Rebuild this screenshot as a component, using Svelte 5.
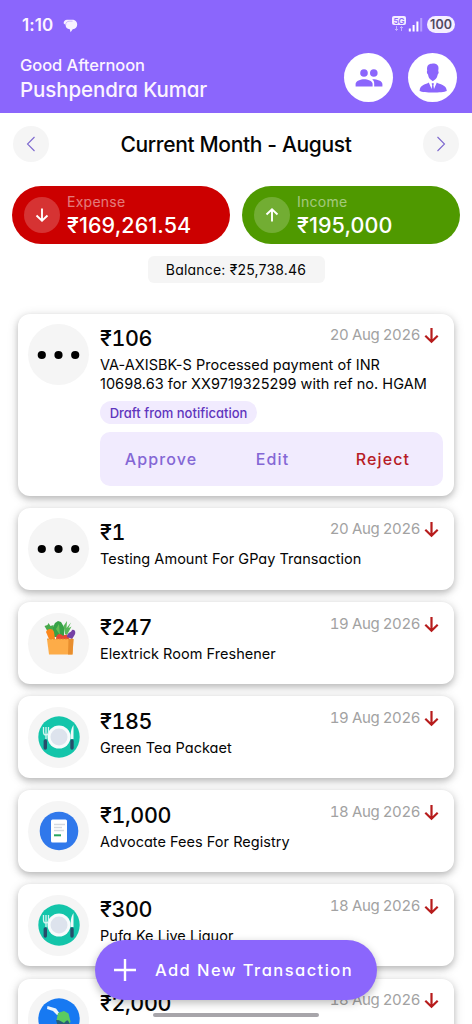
<script>
  const items = [
    { icon: 'dots', amount: '₹106', note: 'VA-AXISBK-S Processed payment of INR\n10698.63 for XX9719325299 with ref no. HGAM', date: '20 Aug 2026', draft: true },
    { icon: 'dots', amount: '₹1', note: 'Testing Amount For GPay Transaction', date: '20 Aug 2026' },
    { icon: 'bag', amount: '₹247', note: 'Elextrick Room Freshener', date: '19 Aug 2026' },
    { icon: 'plate', amount: '₹185', note: 'Green Tea Packaet', date: '19 Aug 2026' },
    { icon: 'bill', amount: '₹1,000', note: 'Advocate Fees For Registry', date: '18 Aug 2026' },
    { icon: 'plate', amount: '₹300', note: 'Pufa Ke Live Liquor', date: '18 Aug 2026' },
    { icon: 'fuel', amount: '₹2,000', note: 'Fuel', date: '18 Aug 2026' }
  ];
</script>

<div class="screen">
  <header>
    <div class="status">
      <span class="clock">1:10</span>
      <svg class="chat" width="15" height="15" viewBox="0 0 15 15"><path d="M4 .8h5.200C12 .8 14.200 2.600 14.200 5.500c0 2.400-1.700 4.500-4.500 4.700L7.600 13.200 6.800 10.200C4 10 2.700 8.500 2.600 6L.6 4.200C.8 2.100 2 .8 4 .8Z" fill="#f8f2ff"/><path d="M2.700 6C2.600 3.500 4.300 2.200 6.500 2.200h3" fill="none" stroke="#8b66fc" stroke-width=".4"/></svg>
      <span class="grow"></span>
      <svg class="net" width="31" height="17" viewBox="0 0 31 17">
        <rect x="0" y="0" width="14" height="9" rx="2" fill="#f4edff"/>
        <text x="7" y="7.500" text-anchor="middle" font-size="8" font-weight="600" fill="#8b66fc">5G</text>
        <path d="M4.500 10v4.500M3 13l1.500 1.500L6 13M9.500 15v-4.500M8 12l1.500-1.500L11 12" fill="none" stroke="#c3b0ff" stroke-width="1"/>
        <path d="M17.800 15.500v-3M21.600 15.500V9M25.400 15.500V5.500" stroke="#fff" stroke-width="2"/>
        <path d="M29.200 15.500V2" stroke="#b59dff" stroke-width="2"/>
      </svg>
      <span class="battery">100</span>
    </div>
    <div class="hello">
      <div class="names">
        <div class="greet">Good Afternoon</div>
        <div class="user">Pushpendra Kumar</div>
      </div>
      <button class="round" aria-label="Groups">
        <svg width="28" height="20" viewBox="0 0 28 20" fill="#8b66fc"><circle cx="9" cy="5" r="3.800"/><path d="M.6 18.500v-2.400c0-3.400 5.200-4.900 8.600-4.900s8.400 1.500 8.400 4.900v2.400Z"/><circle cx="18.800" cy="5" r="3.800"/><path d="M17.800 11.300c4.200.1 9.600 1.500 9.600 4.800v2.400h-8.200v-2.400c0-2-.2-3.500-1.900-4.700Z"/></svg>
      </button>
      <button class="round" aria-label="Profile">
        <svg width="28" height="30" viewBox="0 0 28 30" fill="#8b66fc"><path d="M8.200 7.500C7.600 3.500 9 .8 13 .8c1-.7 6.800-.5 6.500 4.600l-.3 2.800c.9.300.4 2.800-.5 3.200-.4 2.600-1.500 4.100-2.600 5.200l-2.300 1.600-2.200-1.600c-1.200-1.100-2.200-2.700-2.600-5.200-1-.5-1.500-2.800-.8-3.900Z"/><path d="M9.800 19.600 12.600 26l.6-4-.7-1.300 1.300-.8 1.300.8-.7 1.300.6 4 2.800-6.400c2.600 2 9.600 1.900 10 8.300C23.600 30 4.400 30 .6 27.900.9 21.500 7.200 21.600 9.800 19.600Z"/></svg>
      </button>
    </div>
  </header>

  <nav>
    <button class="arrow" aria-label="Previous month"><svg width="10" height="16" viewBox="0 0 10 16"><path d="M8.500 1 1.500 8l7 7"/></svg></button>
    <h1>Current Month - August</h1>
    <button class="arrow" aria-label="Next month"><svg width="10" height="16" viewBox="0 0 10 16"><path d="M1.500 1l7 7-7 7"/></svg></button>
  </nav>

  <section class="totals">
    <div class="total expense">
      <span class="disc"><svg width="14" height="16" viewBox="0 0 14 16"><path d="M7 1.500v12M1.500 8.500 7 13.800l5.500-5.300"/></svg></span>
      <div><div class="label">Expense</div><div class="sum">₹169,261.54</div></div>
    </div>
    <div class="total income">
      <span class="disc"><svg width="14" height="16" viewBox="0 0 14 16"><path d="M7 14.500V2.500M1.500 7.500 7 2.200l5.500 5.300"/></svg></span>
      <div><div class="label">Income</div><div class="sum">₹195,000</div></div>
    </div>
  </section>
  <div class="balance"><span>Balance: ₹25,738.46</span></div>

  <main>
    {#each items as item}
      <article class:draft={item.draft}>
        <div class="avatar">
          {#if item.icon === 'dots'}
            <svg width="43" height="10" viewBox="0 0 43 10"><circle cx="4.800" cy="5" r="4.100"/><circle cx="21.500" cy="5" r="4.100"/><circle cx="38.200" cy="5" r="4.100"/></svg>
          {:else if item.icon === 'bag'}
            <svg class="bag" width="42" height="42" viewBox="0 0 42 42">
              <path d="M9 15 4.500 7l3-1 1-2 2 3 3-1-1 8Z" fill="#48a94b"/>
              <path d="M13 18V8l2-4 3-2 3 1 3 5v10Z" fill="#37a247"/>
              <path d="M16 10l3-5 1 11" fill="#66bd55"/>
              <path d="M25 15 23.500 7 27 2l-.5 7L31 3.500 28.500 9l3-1.500L27 16Z" fill="#58b75a"/>
              <path d="M6 13c1-4 7-4 8 0l1 7H9Z" fill="#fb861b"/>
              <path d="M16 20c0-6 5-6 7-3 3-3 7 0 6 4Z" fill="#e84934"/>
              <path d="M27 18c0-5 4-4 5-7 4-1 4 4 2 6l-2 3Z" fill="#7541a5"/>
              <path d="M7 20h26.500l-1 15.500H9Z" fill="#fdac48"/><path d="M28.500 20h5l-1 15.500h-4.500Z" fill="#e88e2e"/>
              <path d="M7 20h26" stroke="#d98e34" stroke-dasharray="2 1" stroke-width=".8"/>
            </svg>
          {:else if item.icon === 'plate'}
            <svg width="42" height="42" viewBox="0 0 42 42">
              <circle cx="21" cy="21" r="20.700" fill="#13c5aa"/>
              <circle cx="21" cy="21" r="11.500" fill="#f7fbfc"/><circle cx="21" cy="21" r="8.500" fill="#dde3ed"/>
              <path d="M5.500 11v5c0 2 1 3 2.500 3s2.500-1 2.500-3v-5M8 11v12" fill="none" stroke="#d6f4f1" stroke-width="1.300"/>
              <path d="M35.500 9v14h-3c0-6 .4-10 3-14Z" fill="#eff9fa"/>
              <path d="M7.300 25v7M34 25v7" stroke="#274c6a" stroke-width="3.400" stroke-linecap="round"/>
            </svg>
          {:else if item.icon === 'bill'}
            <svg width="40" height="40" viewBox="0 0 40 40">
              <circle cx="20" cy="20" r="19.300" fill="#3078eb"/><rect x="12" y="8.500" width="16" height="23" rx="1.500" fill="#fff"/>
              <path d="M15 13.500h11M15 16.500h8M15 19.500h10" stroke="#d5d9df" stroke-width="1.500"/><path d="M15 24.300h7" stroke="#27a660" stroke-width="2"/>
            </svg>
          {:else}
            <svg width="42" height="42" viewBox="0 0 42 42">
              <circle cx="21" cy="21" r="20.700" fill="#1779f2"/>
              <path d="m9.500 8 8.500 2.500 4 5.500-3 1-4-4-6-2Z" fill="#eef6fc"/>
              <path d="m20 15 6-2 4.500 2.500 2 8-2 6-12-7Z" fill="#5bcb61"/><path d="m18 22 12 .5L33 28l-5 6-8-5Z" fill="#285e78"/><path d="m19 21 10 1-3 3Z" fill="#5bcb61"/>
            </svg>
          {/if}
        </div>
        <div class="body">
          <div class="top">
            <span class="amount">{item.amount}</span>
            <span class="date">{item.date}</span>
            <svg class="down" width="15" height="17" viewBox="0 0 15 17"><path d="M7.500 1v13.500M1.300 8.700l6.200 6 6.200-6"/></svg>
          </div>
          <p class="note">{item.note}</p>
          {#if item.draft}
            <span class="chip">Draft from notification</span>
            <div class="actions"><button>Approve</button><button>Edit</button><button class="reject">Reject</button></div>
          {/if}
        </div>
      </article>
    {/each}
  </main>

  <button class="add">
    <svg width="22" height="22" viewBox="0 0 22 22"><path d="M11 0v22M0 11h22" stroke="#fff" stroke-width="2.400"/></svg>
    <span>Add New Transaction</span>
  </button>
  <div class="handle"></div>
</div>

<style>
  :global(body) { background: #fff; overflow: hidden; }
  .screen { position: relative; width: 472px; height: 1024px; overflow: hidden; background: #fff; color: #050505; font-family: Inter, 'Noto Sans', sans-serif; font-feature-settings: 'cv11' 1; font-weight: 500; display: flex; flex-direction: column; }
  button { font: inherit; font-feature-settings: inherit; letter-spacing: inherit; border: 0; padding: 0; background: none; color: inherit; display: flex; align-items: center; justify-content: center; white-space: nowrap; }
  svg { display: block; flex: none; }
  header { height: 113px; flex: none; background: #8b66fc; color: #fcf4ff; }
  .status { display: flex; height: 49px; align-items: center; padding: 0 17px 0 22px; box-sizing: border-box; }
  .clock { font-size: 17px; width: 41px; font-weight: 600; letter-spacing: .1px; }
  .chat { margin-top: 3px; }
  .grow { flex: 1; }
  .net { margin-right: 4px; }
  .net text { font-family: Inter, sans-serif; }
  .battery { width: 28px; height: 17px; border-radius: 9px; background: #f5efff; color: #51495f; font-size: 12.500px; font-weight: 600; line-height: 17px; text-align: center; }
  .hello { display: flex; padding: 4px 15px 0 20px; gap: 15px; }
  .names { flex: 1; padding-top: 1px; white-space: nowrap; }
  .greet { font-size: 16.500px; line-height: 22px; letter-spacing: -.05px; font-weight: 450; }
  .user { font-size: 20.500px; line-height: 28px; letter-spacing: -.1px; }
  .round { width: 49px; height: 49px; border-radius: 50%; background: #fff; }
  nav { display: flex; align-items: center; justify-content: space-between; height: 61px; flex: none; padding: 0 13px; }
  .arrow { width: 36px; height: 36px; border-radius: 50%; background: #f5f5f5; }
  .arrow path { fill: none; stroke: #7d68cf; stroke-width: 1.100; }
  h1 { margin: 1px 0 0; font-size: 21px; font-weight: 500; letter-spacing: -.34px; white-space: nowrap; }
  .totals { display: flex; gap: 12px; padding: 12px 12px 0; flex: none; }
  .total { width: 218px; height: 58px; box-sizing: border-box; border-radius: 29px; display: flex; align-items: center; padding-left: 12px; gap: 7px; color: #fff; white-space: nowrap; }
  .expense { background: #c00; } .income { background: #4f9900; }
  .disc { width: 36px; height: 36px; border-radius: 50%; background: #ffffff33; display: grid; place-items: center; }
  .disc path { fill: none; stroke: #fff; stroke-width: 1.900; }
  .label { font-size: 14px; line-height: 21px; letter-spacing: .25px; opacity: .48; font-weight: 400; }
  .sum { font-size: 21.500px; line-height: 27px; letter-spacing: .1px; padding-bottom: 1px; }
  .balance { display: flex; justify-content: center; padding-top: 12px; flex: none; }
  .balance span { width: 177px; height: 27px; border-radius: 6px; background: #f5f5f5; font-size: 14px; letter-spacing: .2px; line-height: 28px; text-align: center; font-weight: 400; white-space: nowrap; }
  main { padding: 31px 18px 0; display: flex; flex-direction: column; gap: 12.100px; }
  article { flex: none; height: 82px; box-sizing: border-box; border-radius: 12px; background: #fff; box-shadow: 0 3px 6px #00000030, 0 2px 12px #00000024; padding: 10.400px 10px 0; display: flex; gap: 11px; }
  article.draft { height: 182px; padding-top: 10px; }
  .avatar { flex: none; width: 61px; height: 61px; border-radius: 50%; background: #f5f5f5; display: grid; place-items: center; }
  .bag { position: relative; left: 2px; top: -3px; }
  .body { flex: 1; min-width: 0; }
  .top { display: flex; height: 30px; white-space: nowrap; }
  .amount { font-size: 21.500px; line-height: 29px; letter-spacing: -.4px; font-variant-numeric: tabular-nums; flex: 1; }
  .date { font-size: 15px; line-height: 22px; letter-spacing: -.42px; font-variant-numeric: tabular-nums; color: #a2a2a2; font-weight: 400; }
  .down { margin: 3px 5px 0 4px; } .down path { fill: none; stroke: #b71c1c; stroke-width: 2.200; }
  .note { margin: 1px 0 0; font-size: 14.500px; line-height: 19px; letter-spacing: .03px; font-weight: 400; white-space: pre; }
  .chip { display: block; width: 157px; height: 23px; margin-top: 8px; border-radius: 12px; background: #f1ebfe; color: #5f35bd; font-size: 13px; line-height: 24px; text-align: center; white-space: nowrap; }
  .actions { width: 343px; height: 54px; border-radius: 10px; margin-top: 8px; background: #f1ebfe; color: #8467d5; display: grid; grid-template-columns: 122px 101px 120px; font-size: 16px; letter-spacing: 1.100px; }
  .reject { color: #b71c26; }
  .add { position: absolute; left: 95px; top: 940px; width: 282px; height: 60px; border-radius: 30px; background: #8b66fc; color: #fff; gap: 19px; padding-right: 5px; box-sizing: border-box; box-shadow: 0 3px 8px #00000045; font-size: 16.500px; letter-spacing: 1.450px; }
  .handle { position: absolute; left: 153px; top: 1013px; width: 166px; height: 4px; border-radius: 2px; background: #a7a5aa; }
</style>
